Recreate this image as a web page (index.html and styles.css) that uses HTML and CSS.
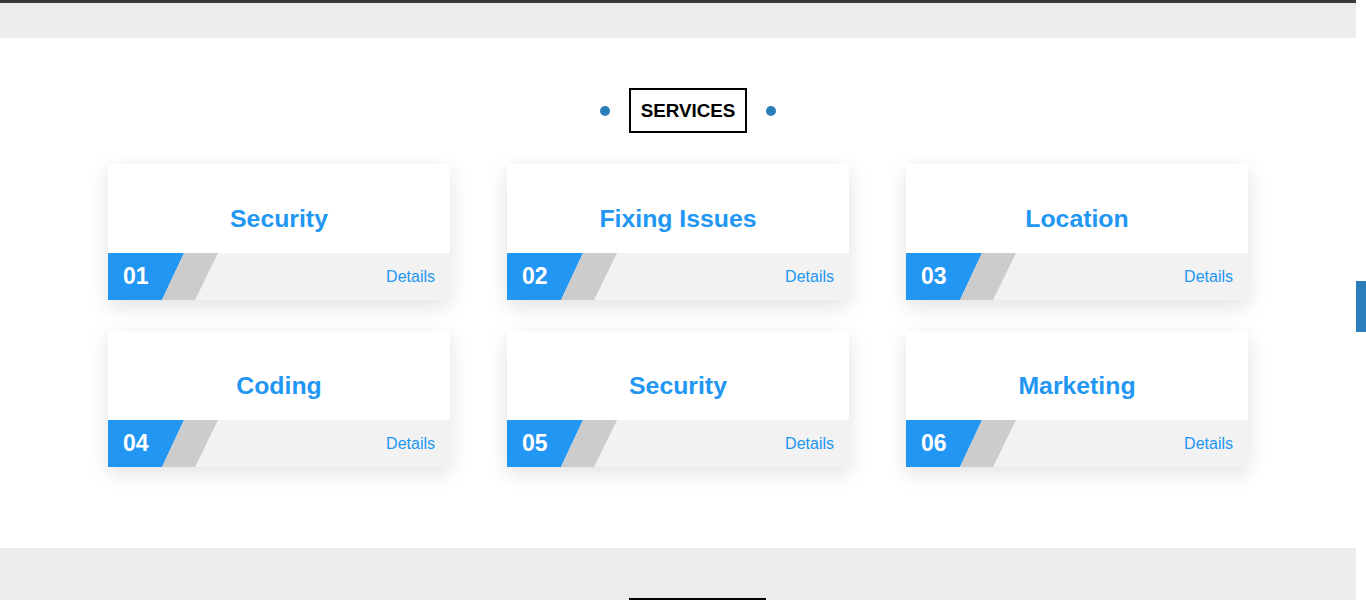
FILE: index.html
```html
<!DOCTYPE html>
<html>
<head>
<meta charset="utf-8">
<link rel="stylesheet" href="styles.css">
</head>
<body>
<div class="page">
  <div class="topbar"></div>
  <div class="band"></div>
  <section class="services">
    <div class="heading">
      <span class="dot"></span>
      <h2 class="title-box">SERVICES</h2>
      <span class="dot"></span>
    </div>
    <div class="grid">
      <div class="card"><h3 class="card-title">Security</h3><div class="strip"><div class="num">01</div><div class="slant"></div><a class="details">Details</a></div></div>
      <div class="card"><h3 class="card-title">Fixing Issues</h3><div class="strip"><div class="num">02</div><div class="slant"></div><a class="details">Details</a></div></div>
      <div class="card"><h3 class="card-title">Location</h3><div class="strip"><div class="num">03</div><div class="slant"></div><a class="details">Details</a></div></div>
      <div class="card"><h3 class="card-title">Coding</h3><div class="strip"><div class="num">04</div><div class="slant"></div><a class="details">Details</a></div></div>
      <div class="card"><h3 class="card-title">Security</h3><div class="strip"><div class="num">05</div><div class="slant"></div><a class="details">Details</a></div></div>
      <div class="card"><h3 class="card-title">Marketing</h3><div class="strip"><div class="num">06</div><div class="slant"></div><a class="details">Details</a></div></div>
    </div>
  </section>
  <section class="next">
    <div class="next-box"></div>
  </section>
</div>
<div class="scroll-thumb"></div>
</body>
</html>
```
FILE: styles.css
```css
html, body {
  margin: 0;
  padding: 0;
  background: #fff;
  overflow: hidden;
  height: 600px;
}
body {
  font-family: "Liberation Sans", Arial, sans-serif;
}
.page {
  width: 1356px;
}
.topbar {
  height: 3px;
  background: #3a3a3a;
}
.band {
  height: 35px;
  background: #ececec;
}
.services {
  background: #fff;
  padding: 50px 0 81px;
}
.heading {
  display: flex;
  align-items: center;
  justify-content: center;
  gap: 19px;
  padding-left: 20px;
  margin-bottom: 31px;
}
.dot {
  width: 10px;
  height: 10px;
  border-radius: 50%;
  background: #2a7fba;
}
.title-box {
  margin: 0;
  box-sizing: border-box;
  height: 45px;
  width: 118px;
  border: 2px solid #000;
  display: flex;
  align-items: center;
  justify-content: center;
  font-size: 18.8px;
  font-weight: bold;
  color: #000;
}
.grid {
  width: 1140px;
  margin: 0 auto;
  display: grid;
  grid-template-columns: repeat(3, 342px);
  column-gap: 57px;
  row-gap: 31px;
}
.card {
  background: #fff;
  box-shadow: 0 6px 20px rgba(0,0,0,0.12);
  height: 136px;
  display: flex;
  flex-direction: column;
}
.card-title {
  margin: 0;
  height: 89px;
  box-sizing: border-box;
  padding-top: 41px;
  text-align: center;
  font-size: 24.8px;
  line-height: 28px;
  font-weight: bold;
  color: #2196f3;
}
.strip {
  height: 47px;
  background: #f2f2f2;
  display: flex;
  align-items: stretch;
}
.num {
  width: 76px;
  background: #2196f3;
  clip-path: polygon(0 0, 100% 0, calc(100% - 22px) 100%, 0 100%);
  color: #fff;
  font-size: 23px;
  font-weight: bold;
  line-height: 47px;
  box-sizing: border-box;
  padding-left: 15px;
}
.slant {
  width: 56px;
  margin-left: -22px;
  background: #cccccc;
  clip-path: polygon(22px 0, 100% 0, 33px 100%, 0 100%);
}
.details {
  margin-left: auto;
  padding-right: 15px;
  font-size: 16px;
  line-height: 47px;
  color: #2196f3;
}
.next {
  background: #ececec;
  height: 52px;
  overflow: hidden;
  box-sizing: border-box;
  padding: 50px 0 0 39px;
  display: flex;
  justify-content: center;
}
.next-box {
  flex: none;
  width: 137px;
  height: 45px;
  box-sizing: border-box;
  border: 2px solid #000;
}
.scroll-thumb {
  position: fixed;
  right: 0;
  top: 281px;
  width: 10px;
  height: 51px;
  background: #2a7fba;
}
```
